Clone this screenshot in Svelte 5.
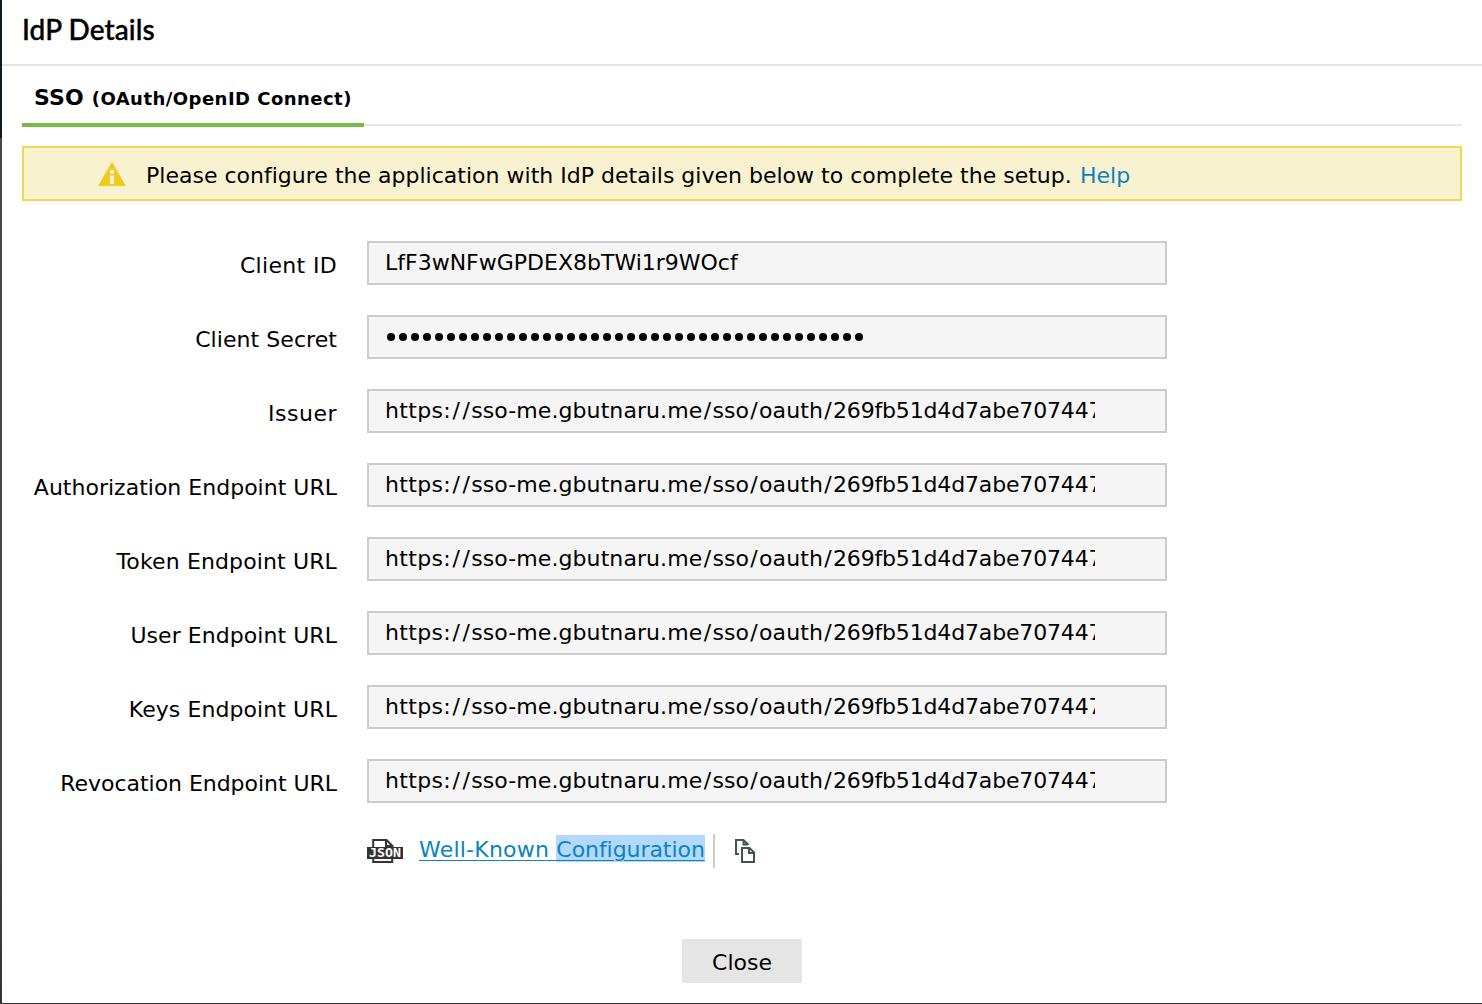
<script>
  const url = 'https://sso-me.gbutnaru.me/sso/oauth/269fb51d4d7abe707447';
  const fields = [
    { label: 'Client ID', value: 'LfF3wNFwGPDEX8bTWi1r9WOcf', kind: 'id', track: 0.33 },
    { label: 'Client Secret', value: '', kind: 'secret', track: 0.06 },
    { label: 'Issuer', value: url, kind: 'url', track: 0.5 },
    { label: 'Authorization Endpoint URL', value: url, kind: 'url', track: 0.01 },
    { label: 'Token Endpoint URL', value: url, kind: 'url', track: 0.13 },
    { label: 'User Endpoint URL', value: url, kind: 'url', track: 0.05 },
    { label: 'Keys Endpoint URL', value: url, kind: 'url', track: 0.08 },
    { label: 'Revocation Endpoint URL', value: url, kind: 'url', track: -0.04 }
  ];
  const dots = Array.from({ length: 40 });
  // Splits a URL into segments, keeping each slash as its own part.
  const parts = (u) => u.split(/(\/)/).filter(Boolean);
  const partClass = (p) =>
    p === '/' ? 'slash' : p === 'https:' ? 'scheme' : p.length > 15 && !p.includes('.') ? 'hash' : 'seg';
</script>

<div class="page">
  <section class="dialog">
    <header><h1>IdP Details</h1></header>
    <nav>
      <div class="tab"><b class="sso">SSO</b><b class="proto">(OAuth/OpenID Connect)</b></div>
    </nav>
    <div class="notice">
      <svg class="warn" width="28" height="24" viewBox="0 0 28 24">
        <path d="M14 0L28 24H0Z" fill="#efca1f" />
        <path d="M12 8h4v4h-4zM12 13.5h4V22h-4z" fill="#faf2d0" />
      </svg>
      <p>Please configure the application with IdP details given below to complete the setup.</p>
      <a class="help" href="#help">Help</a>
    </div>
    <div class="form">
      {#each fields as f}
        <div class="row">
          <span class="label" style="letter-spacing: {f.track}px">{f.label}</span>
          <div class="field">
            {#if f.kind === 'secret'}
              <div class="dots">{#each dots as _}<i></i>{/each}</div>
            {:else if f.kind === 'url'}
              <div class="value">{#each parts(f.value) as p}<span class={partClass(p)}>{p}</span>{/each}</div>
            {:else}
              <div class="value">{f.value}</div>
            {/if}
          </div>
        </div>
      {/each}
    </div>
    <div class="links">
      <svg class="json" width="36" height="24" viewBox="0 0 36 24">
        <path d="M6.2 9V1H19.5L25.5 7V9M6.2 17V23H25.2V17M19 1V7H25.5" fill="none" stroke="#333" stroke-width="2" />
        <rect y="8" width="36" height="12" fill="#333" />
        <text x="2" y="18" textLength="32" lengthAdjust="spacingAndGlyphs">JSON</text>
      </svg>
      <a class="well" href="#config">Well-Known{' '}<mark>Configuration</mark></a>
      <span class="sep"></span>
      <svg width="20" height="24" viewBox="0 0 20 24" fill="none" stroke="#465356" stroke-width="2">
        <path d="M4 15H1V1H8.5L13 5.5V6M8.5 1V5.5H13" />
        <path d="M7 9H14.5L19 13.5V23H7ZM14 9V14H19" />
      </svg>
    </div>
    <footer><button>Close</button></footer>
  </section>
</div>

<style>
  :global(body) { margin: 0; background: #fff; }
  * { box-sizing: border-box; }
  .page {
    width: 1482px; height: 1004px; padding: 0 0 1px 2px; overflow: hidden;
    background: linear-gradient(#101a22 0 138px, #484848 138px 800px, #333 1003px);
    font: 22px/28px "DejaVu Sans", Verdana, sans-serif; color: #000;
  }
  .dialog { height: 1003px; background: #fff; }
  header { height: 66px; border-bottom: 2px solid #e5e5e5; padding: 11px 0 0 20px; }
  h1 { margin: 0; font: 500 28px/36px Lato, sans-serif; letter-spacing: 0.08px; -webkit-text-stroke: 0.4px #000; }
  nav { height: 60px; margin: 0 20px; border-bottom: 2px solid #e4e8e8; }
  .tab {
    width: 342px; height: 61px; border-bottom: 4px solid #7ab848; padding: 18px 0 0 12px;
    display: flex; align-items: baseline; gap: 8px; white-space: nowrap;
  }
  .sso { font-size: 22px; letter-spacing: 0.1px; }
  .proto { font-size: 18px; letter-spacing: 0.47px; }
  .notice {
    margin: 20px 20px 0; height: 55px; border: 2px solid #f0d850; background: #f9f2d0;
    display: flex; align-items: center; padding: 0 0 0 74px; white-space: nowrap;
  }
  .notice p { margin: 0 0 0 20px; padding-top: 4px; width: 934px; letter-spacing: 0.01px; }
  .help { color: #0a84c0; text-decoration: none; padding-top: 4px; }
  .form { margin-top: 40px; display: grid; gap: 30px; }
  .row { display: flex; height: 44px; }
  .label { width: 335px; margin-right: 30px; text-align: right; line-height: 50px; white-space: nowrap; }
  .field {
    width: 800px; border: 2px solid #ccc; background: #f5f5f5; padding: 0 70px 0 16px;
  }
  .value { line-height: 40px; overflow: hidden; white-space: nowrap; }
  .slash { padding: 0 1.3px; }
  .scheme { letter-spacing: 0.35px; }
  .seg { letter-spacing: 0.09px; }
  .hash { letter-spacing: -0.16px; }
  .dots { display: flex; gap: 4px; padding: 16px 0 0 2px; }
  .dots i { width: 8px; height: 8px; border-radius: 50%; background: #000; flex: none; }
  .links { display: flex; align-items: center; height: 34px; margin: 31px 0 0 365px; }
  .json text { font: bold 11.5px "DejaVu Sans Mono", monospace; fill: #fff; }
  .well {
    margin-left: 16px; color: #0a84c0; height: 28px; margin-top: -2px; width: 286px; white-space: pre;
    letter-spacing: 0.22px; text-decoration: underline; text-decoration-thickness: 1px; text-underline-offset: 3px;
  }
  mark { background: #b3d8fd; color: inherit; padding: 2px 0 0; letter-spacing: -0.06px; }
  .sep { width: 2px; height: 34px; background: #ccc; margin: 0 20px 0 8px; }
  footer { display: flex; justify-content: center; margin: 71px 0 0; }
  button { width: 120px; height: 44px; border: 0; padding: 3px 0 0; background: #e5e5e5; font: inherit; color: #000; }
</style>
